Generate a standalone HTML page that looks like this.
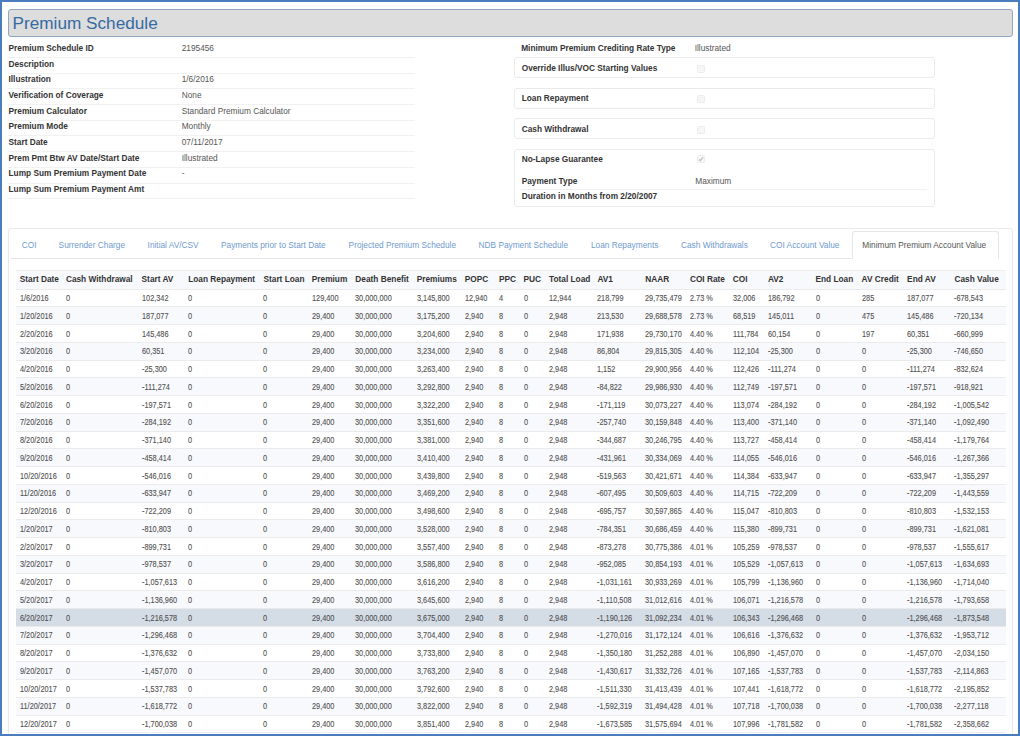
<!DOCTYPE html>
<html><head><meta charset="utf-8"><style>
*{box-sizing:border-box;margin:0;padding:0}
html,body{width:1020px;height:736px;overflow:hidden;background:#fff}
body{position:relative;font-family:"Liberation Sans",sans-serif;color:#333}
.a{position:absolute;white-space:nowrap;line-height:1}
.frame{position:absolute;left:0;top:0;width:1020px;height:736px;border:2px solid #4a7dbd;z-index:10;pointer-events:none}
.title{position:absolute;left:8px;top:9px;width:1004.5px;height:28px;background:#dddddd;border:1px solid #90a6c0;border-radius:3px}
.title span{position:absolute;left:3.5px;top:5.2px;font-size:17.2px;color:#356aa3;line-height:1}
.lbl{font-size:8.3px;font-weight:bold;color:#333}
.val{font-size:8.3px;color:#555}
.sep{position:absolute;height:1px;background:#f1f1f1}
.box{position:absolute;left:514px;width:421px;border:1px solid #eaeaea;border-radius:3px}
.cb{position:absolute;left:697px;width:8px;height:8px;border:1px solid #ececec;border-radius:1.5px;background:#f6f6f6}
.panel{position:absolute;left:8px;top:228px;width:1005px;height:600px;border:1px solid #e9e9e9;border-radius:3px}
.tab{font-size:8.3px;color:#6f9ad0}
.atab{position:absolute;left:852px;top:231px;width:147px;height:28px;border:1px solid #e6e6e6;border-bottom:none;border-radius:3px 3px 0 0;background:#fff}
table{position:absolute;left:16.0px;top:270.0px;width:989.5px;border-collapse:collapse;table-layout:fixed}
td,th{padding:0 0 0 3.8px;text-align:left;white-space:nowrap;overflow:hidden}
th{font-size:8.3px;font-weight:bold;color:#333;height:18.6px;border-top:1px solid #eeeeee;border-bottom:1px solid #ebebeb;background:#f8f9fd;vertical-align:top;padding-top:3.9px;line-height:1}
td{font-size:8.3px;color:#505050;height:17.75px;border-bottom:1px solid #ebebeb;vertical-align:top;padding-top:4.6px;line-height:1}
tr.s td{background:#f8f9fd}
td i{font-style:normal;display:inline-block;-webkit-text-stroke:0.1px #505050;transform:scaleX(0.885);transform-origin:0 50%}
tr.h td{background:#d4dce6}
</style></head><body>
<div class="frame"></div>
<div class="title"><span>Premium Schedule</span></div>

<div class="a lbl" style="left:8.5px;top:43.87px">Premium Schedule ID</div>
<div class="a val" style="left:181.7px;top:43.87px">2195456</div>
<div class="sep" style="left:8px;width:407px;top:56.90px"></div>
<div class="a lbl" style="left:8.5px;top:59.57px">Description</div>
<div class="sep" style="left:8px;width:407px;top:72.60px"></div>
<div class="a lbl" style="left:8.5px;top:75.27px">Illustration</div>
<div class="a val" style="left:181.7px;top:75.27px">1/6/2016</div>
<div class="sep" style="left:8px;width:407px;top:88.30px"></div>
<div class="a lbl" style="left:8.5px;top:90.97px">Verification of Coverage</div>
<div class="a val" style="left:181.7px;top:90.97px">None</div>
<div class="sep" style="left:8px;width:407px;top:104.00px"></div>
<div class="a lbl" style="left:8.5px;top:106.67px">Premium Calculator</div>
<div class="a val" style="left:181.7px;top:106.67px">Standard Premium Calculator</div>
<div class="sep" style="left:8px;width:407px;top:119.70px"></div>
<div class="a lbl" style="left:8.5px;top:122.37px">Premium Mode</div>
<div class="a val" style="left:181.7px;top:122.37px">Monthly</div>
<div class="sep" style="left:8px;width:407px;top:135.40px"></div>
<div class="a lbl" style="left:8.5px;top:138.07px">Start Date</div>
<div class="a val" style="left:181.7px;top:138.07px">07/11/2017</div>
<div class="sep" style="left:8px;width:407px;top:151.10px"></div>
<div class="a lbl" style="left:8.5px;top:153.77px">Prem Pmt Btw AV Date/Start Date</div>
<div class="a val" style="left:181.7px;top:153.77px">Illustrated</div>
<div class="sep" style="left:8px;width:407px;top:166.80px"></div>
<div class="a lbl" style="left:8.5px;top:169.47px">Lump Sum Premium Payment Date</div>
<div class="a val" style="left:181.7px;top:169.47px">-</div>
<div class="sep" style="left:8px;width:407px;top:182.50px"></div>
<div class="a lbl" style="left:8.5px;top:185.17px">Lump Sum Premium Payment Amt</div>
<div class="sep" style="left:8px;width:407px;top:198.20px"></div>
<div class="a lbl" style="left:521.2px;top:43.87px">Minimum Premium Crediting Rate Type</div>
<div class="a val" style="left:694.7px;top:43.87px">Illustrated</div>
<div class="box" style="top:57px;height:21px"></div>
<div class="a lbl" style="left:521.7px;top:63.97px">Override Illus/VOC Starting Values</div>
<div class="cb" style="top:65px"></div>
<div class="box" style="top:88px;height:21px"></div>
<div class="a lbl" style="left:521.7px;top:94.17px">Loan Repayment</div>
<div class="cb" style="top:95.3px"></div>
<div class="box" style="top:118px;height:21px"></div>
<div class="a lbl" style="left:521.7px;top:124.67px">Cash Withdrawal</div>
<div class="cb" style="top:125.6px"></div>
<div class="box" style="top:149px;height:58px"></div>
<div class="a lbl" style="left:521.7px;top:154.87px">No-Lapse Guarantee</div>
<div class="cb" style="top:155px"></div><svg width="8" height="8" viewBox="0 0 8 8" style="position:absolute;left:697px;top:155px"><path d="M2.1 4.4 L3.4 5.6 L6 2.3" fill="none" stroke="#c2c2c2" stroke-width="1.3"/></svg>
<div class="a lbl" style="left:521.7px;top:176.97px">Payment Type</div>
<div class="a val" style="left:695.3px;top:176.97px">Maximum</div>
<div class="sep" style="left:521px;width:405.6px;top:189.3px"></div>
<div class="a lbl" style="left:521.7px;top:192.27px">Duration in Months from 2/20/2007</div>
<div class="panel"></div>
<div class="sep" style="left:11.4px;width:840.7px;top:258px;background:#e6e6e6"></div>
<div class="atab"></div>
<div class="a tab" style="left:21.7px;top:240.97px">COI</div>
<div class="a tab" style="left:58.6px;top:240.97px">Surrender Charge</div>
<div class="a tab" style="left:147.6px;top:240.97px">Initial AV/CSV</div>
<div class="a tab" style="left:221.0px;top:240.97px">Payments prior to Start Date</div>
<div class="a tab" style="left:348.6px;top:240.97px">Projected Premium Schedule</div>
<div class="a tab" style="left:478.6px;top:240.97px">NDB Payment Schedule</div>
<div class="a tab" style="left:591.0px;top:240.97px">Loan Repayments</div>
<div class="a tab" style="left:681.0px;top:240.97px">Cash Withdrawals</div>
<div class="a tab" style="left:770.0px;top:240.97px">COI Account Value</div>
<div class="a tab" style="left:862.3px;top:240.97px;color:#555">Minimum Premium Account Value</div>
<table><colgroup><col style="width:46.10px"><col style="width:75.70px"><col style="width:46.60px"><col style="width:75.30px"><col style="width:48.30px"><col style="width:43.60px"><col style="width:61.30px"><col style="width:48.10px"><col style="width:34.30px"><col style="width:24.50px"><col style="width:25.50px"><col style="width:48.40px"><col style="width:47.80px"><col style="width:44.70px"><col style="width:42.80px"><col style="width:35.20px"><col style="width:47.60px"><col style="width:46.10px"><col style="width:45.50px"><col style="width:47.40px"><col style="width:54.70px"></colgroup>
<tr><th>Start Date</th><th>Cash Withdrawal</th><th>Start AV</th><th>Loan Repayment</th><th>Start Loan</th><th>Premium</th><th>Death Benefit</th><th>Premiums</th><th>POPC</th><th>PPC</th><th>PUC</th><th>Total Load</th><th>AV1</th><th>NAAR</th><th>COI Rate</th><th>COI</th><th>AV2</th><th>End Loan</th><th>AV Credit</th><th>End AV</th><th>Cash Value</th></tr>
<tr><td><i>1/6/2016</i></td><td><i>0</i></td><td><i>102,342</i></td><td><i>0</i></td><td><i>0</i></td><td><i>129,400</i></td><td><i>30,000,000</i></td><td><i>3,145,800</i></td><td><i>12,940</i></td><td><i>4</i></td><td><i>0</i></td><td><i>12,944</i></td><td><i>218,799</i></td><td><i>29,735,479</i></td><td><i>2.73 %</i></td><td><i>32,006</i></td><td><i>186,792</i></td><td><i>0</i></td><td><i>285</i></td><td><i>187,077</i></td><td><i>-678,543</i></td></tr>
<tr class="s"><td><i>1/20/2016</i></td><td><i>0</i></td><td><i>187,077</i></td><td><i>0</i></td><td><i>0</i></td><td><i>29,400</i></td><td><i>30,000,000</i></td><td><i>3,175,200</i></td><td><i>2,940</i></td><td><i>8</i></td><td><i>0</i></td><td><i>2,948</i></td><td><i>213,530</i></td><td><i>29,688,578</i></td><td><i>2.73 %</i></td><td><i>68,519</i></td><td><i>145,011</i></td><td><i>0</i></td><td><i>475</i></td><td><i>145,486</i></td><td><i>-720,134</i></td></tr>
<tr><td><i>2/20/2016</i></td><td><i>0</i></td><td><i>145,486</i></td><td><i>0</i></td><td><i>0</i></td><td><i>29,400</i></td><td><i>30,000,000</i></td><td><i>3,204,600</i></td><td><i>2,940</i></td><td><i>8</i></td><td><i>0</i></td><td><i>2,948</i></td><td><i>171,938</i></td><td><i>29,730,170</i></td><td><i>4.40 %</i></td><td><i>111,784</i></td><td><i>60,154</i></td><td><i>0</i></td><td><i>197</i></td><td><i>60,351</i></td><td><i>-660,999</i></td></tr>
<tr class="s"><td><i>3/20/2016</i></td><td><i>0</i></td><td><i>60,351</i></td><td><i>0</i></td><td><i>0</i></td><td><i>29,400</i></td><td><i>30,000,000</i></td><td><i>3,234,000</i></td><td><i>2,940</i></td><td><i>8</i></td><td><i>0</i></td><td><i>2,948</i></td><td><i>86,804</i></td><td><i>29,815,305</i></td><td><i>4.40 %</i></td><td><i>112,104</i></td><td><i>-25,300</i></td><td><i>0</i></td><td><i>0</i></td><td><i>-25,300</i></td><td><i>-746,650</i></td></tr>
<tr><td><i>4/20/2016</i></td><td><i>0</i></td><td><i>-25,300</i></td><td><i>0</i></td><td><i>0</i></td><td><i>29,400</i></td><td><i>30,000,000</i></td><td><i>3,263,400</i></td><td><i>2,940</i></td><td><i>8</i></td><td><i>0</i></td><td><i>2,948</i></td><td><i>1,152</i></td><td><i>29,900,956</i></td><td><i>4.40 %</i></td><td><i>112,426</i></td><td><i>-111,274</i></td><td><i>0</i></td><td><i>0</i></td><td><i>-111,274</i></td><td><i>-832,624</i></td></tr>
<tr class="s"><td><i>5/20/2016</i></td><td><i>0</i></td><td><i>-111,274</i></td><td><i>0</i></td><td><i>0</i></td><td><i>29,400</i></td><td><i>30,000,000</i></td><td><i>3,292,800</i></td><td><i>2,940</i></td><td><i>8</i></td><td><i>0</i></td><td><i>2,948</i></td><td><i>-84,822</i></td><td><i>29,986,930</i></td><td><i>4.40 %</i></td><td><i>112,749</i></td><td><i>-197,571</i></td><td><i>0</i></td><td><i>0</i></td><td><i>-197,571</i></td><td><i>-918,921</i></td></tr>
<tr><td><i>6/20/2016</i></td><td><i>0</i></td><td><i>-197,571</i></td><td><i>0</i></td><td><i>0</i></td><td><i>29,400</i></td><td><i>30,000,000</i></td><td><i>3,322,200</i></td><td><i>2,940</i></td><td><i>8</i></td><td><i>0</i></td><td><i>2,948</i></td><td><i>-171,119</i></td><td><i>30,073,227</i></td><td><i>4.40 %</i></td><td><i>113,074</i></td><td><i>-284,192</i></td><td><i>0</i></td><td><i>0</i></td><td><i>-284,192</i></td><td><i>-1,005,542</i></td></tr>
<tr class="s"><td><i>7/20/2016</i></td><td><i>0</i></td><td><i>-284,192</i></td><td><i>0</i></td><td><i>0</i></td><td><i>29,400</i></td><td><i>30,000,000</i></td><td><i>3,351,600</i></td><td><i>2,940</i></td><td><i>8</i></td><td><i>0</i></td><td><i>2,948</i></td><td><i>-257,740</i></td><td><i>30,159,848</i></td><td><i>4.40 %</i></td><td><i>113,400</i></td><td><i>-371,140</i></td><td><i>0</i></td><td><i>0</i></td><td><i>-371,140</i></td><td><i>-1,092,490</i></td></tr>
<tr><td><i>8/20/2016</i></td><td><i>0</i></td><td><i>-371,140</i></td><td><i>0</i></td><td><i>0</i></td><td><i>29,400</i></td><td><i>30,000,000</i></td><td><i>3,381,000</i></td><td><i>2,940</i></td><td><i>8</i></td><td><i>0</i></td><td><i>2,948</i></td><td><i>-344,687</i></td><td><i>30,246,795</i></td><td><i>4.40 %</i></td><td><i>113,727</i></td><td><i>-458,414</i></td><td><i>0</i></td><td><i>0</i></td><td><i>-458,414</i></td><td><i>-1,179,764</i></td></tr>
<tr class="s"><td><i>9/20/2016</i></td><td><i>0</i></td><td><i>-458,414</i></td><td><i>0</i></td><td><i>0</i></td><td><i>29,400</i></td><td><i>30,000,000</i></td><td><i>3,410,400</i></td><td><i>2,940</i></td><td><i>8</i></td><td><i>0</i></td><td><i>2,948</i></td><td><i>-431,961</i></td><td><i>30,334,069</i></td><td><i>4.40 %</i></td><td><i>114,055</i></td><td><i>-546,016</i></td><td><i>0</i></td><td><i>0</i></td><td><i>-546,016</i></td><td><i>-1,267,366</i></td></tr>
<tr><td><i>10/20/2016</i></td><td><i>0</i></td><td><i>-546,016</i></td><td><i>0</i></td><td><i>0</i></td><td><i>29,400</i></td><td><i>30,000,000</i></td><td><i>3,439,800</i></td><td><i>2,940</i></td><td><i>8</i></td><td><i>0</i></td><td><i>2,948</i></td><td><i>-519,563</i></td><td><i>30,421,671</i></td><td><i>4.40 %</i></td><td><i>114,384</i></td><td><i>-633,947</i></td><td><i>0</i></td><td><i>0</i></td><td><i>-633,947</i></td><td><i>-1,355,297</i></td></tr>
<tr class="s"><td><i>11/20/2016</i></td><td><i>0</i></td><td><i>-633,947</i></td><td><i>0</i></td><td><i>0</i></td><td><i>29,400</i></td><td><i>30,000,000</i></td><td><i>3,469,200</i></td><td><i>2,940</i></td><td><i>8</i></td><td><i>0</i></td><td><i>2,948</i></td><td><i>-607,495</i></td><td><i>30,509,603</i></td><td><i>4.40 %</i></td><td><i>114,715</i></td><td><i>-722,209</i></td><td><i>0</i></td><td><i>0</i></td><td><i>-722,209</i></td><td><i>-1,443,559</i></td></tr>
<tr><td><i>12/20/2016</i></td><td><i>0</i></td><td><i>-722,209</i></td><td><i>0</i></td><td><i>0</i></td><td><i>29,400</i></td><td><i>30,000,000</i></td><td><i>3,498,600</i></td><td><i>2,940</i></td><td><i>8</i></td><td><i>0</i></td><td><i>2,948</i></td><td><i>-695,757</i></td><td><i>30,597,865</i></td><td><i>4.40 %</i></td><td><i>115,047</i></td><td><i>-810,803</i></td><td><i>0</i></td><td><i>0</i></td><td><i>-810,803</i></td><td><i>-1,532,153</i></td></tr>
<tr class="s"><td><i>1/20/2017</i></td><td><i>0</i></td><td><i>-810,803</i></td><td><i>0</i></td><td><i>0</i></td><td><i>29,400</i></td><td><i>30,000,000</i></td><td><i>3,528,000</i></td><td><i>2,940</i></td><td><i>8</i></td><td><i>0</i></td><td><i>2,948</i></td><td><i>-784,351</i></td><td><i>30,686,459</i></td><td><i>4.40 %</i></td><td><i>115,380</i></td><td><i>-899,731</i></td><td><i>0</i></td><td><i>0</i></td><td><i>-899,731</i></td><td><i>-1,621,081</i></td></tr>
<tr><td><i>2/20/2017</i></td><td><i>0</i></td><td><i>-899,731</i></td><td><i>0</i></td><td><i>0</i></td><td><i>29,400</i></td><td><i>30,000,000</i></td><td><i>3,557,400</i></td><td><i>2,940</i></td><td><i>8</i></td><td><i>0</i></td><td><i>2,948</i></td><td><i>-873,278</i></td><td><i>30,775,386</i></td><td><i>4.01 %</i></td><td><i>105,259</i></td><td><i>-978,537</i></td><td><i>0</i></td><td><i>0</i></td><td><i>-978,537</i></td><td><i>-1,555,617</i></td></tr>
<tr class="s"><td><i>3/20/2017</i></td><td><i>0</i></td><td><i>-978,537</i></td><td><i>0</i></td><td><i>0</i></td><td><i>29,400</i></td><td><i>30,000,000</i></td><td><i>3,586,800</i></td><td><i>2,940</i></td><td><i>8</i></td><td><i>0</i></td><td><i>2,948</i></td><td><i>-952,085</i></td><td><i>30,854,193</i></td><td><i>4.01 %</i></td><td><i>105,529</i></td><td><i>-1,057,613</i></td><td><i>0</i></td><td><i>0</i></td><td><i>-1,057,613</i></td><td><i>-1,634,693</i></td></tr>
<tr><td><i>4/20/2017</i></td><td><i>0</i></td><td><i>-1,057,613</i></td><td><i>0</i></td><td><i>0</i></td><td><i>29,400</i></td><td><i>30,000,000</i></td><td><i>3,616,200</i></td><td><i>2,940</i></td><td><i>8</i></td><td><i>0</i></td><td><i>2,948</i></td><td><i>-1,031,161</i></td><td><i>30,933,269</i></td><td><i>4.01 %</i></td><td><i>105,799</i></td><td><i>-1,136,960</i></td><td><i>0</i></td><td><i>0</i></td><td><i>-1,136,960</i></td><td><i>-1,714,040</i></td></tr>
<tr class="s"><td><i>5/20/2017</i></td><td><i>0</i></td><td><i>-1,136,960</i></td><td><i>0</i></td><td><i>0</i></td><td><i>29,400</i></td><td><i>30,000,000</i></td><td><i>3,645,600</i></td><td><i>2,940</i></td><td><i>8</i></td><td><i>0</i></td><td><i>2,948</i></td><td><i>-1,110,508</i></td><td><i>31,012,616</i></td><td><i>4.01 %</i></td><td><i>106,071</i></td><td><i>-1,216,578</i></td><td><i>0</i></td><td><i>0</i></td><td><i>-1,216,578</i></td><td><i>-1,793,658</i></td></tr>
<tr class="h"><td><i>6/20/2017</i></td><td><i>0</i></td><td><i>-1,216,578</i></td><td><i>0</i></td><td><i>0</i></td><td><i>29,400</i></td><td><i>30,000,000</i></td><td><i>3,675,000</i></td><td><i>2,940</i></td><td><i>8</i></td><td><i>0</i></td><td><i>2,948</i></td><td><i>-1,190,126</i></td><td><i>31,092,234</i></td><td><i>4.01 %</i></td><td><i>106,343</i></td><td><i>-1,296,468</i></td><td><i>0</i></td><td><i>0</i></td><td><i>-1,296,468</i></td><td><i>-1,873,548</i></td></tr>
<tr class="s"><td><i>7/20/2017</i></td><td><i>0</i></td><td><i>-1,296,468</i></td><td><i>0</i></td><td><i>0</i></td><td><i>29,400</i></td><td><i>30,000,000</i></td><td><i>3,704,400</i></td><td><i>2,940</i></td><td><i>8</i></td><td><i>0</i></td><td><i>2,948</i></td><td><i>-1,270,016</i></td><td><i>31,172,124</i></td><td><i>4.01 %</i></td><td><i>106,616</i></td><td><i>-1,376,632</i></td><td><i>0</i></td><td><i>0</i></td><td><i>-1,376,632</i></td><td><i>-1,953,712</i></td></tr>
<tr><td><i>8/20/2017</i></td><td><i>0</i></td><td><i>-1,376,632</i></td><td><i>0</i></td><td><i>0</i></td><td><i>29,400</i></td><td><i>30,000,000</i></td><td><i>3,733,800</i></td><td><i>2,940</i></td><td><i>8</i></td><td><i>0</i></td><td><i>2,948</i></td><td><i>-1,350,180</i></td><td><i>31,252,288</i></td><td><i>4.01 %</i></td><td><i>106,890</i></td><td><i>-1,457,070</i></td><td><i>0</i></td><td><i>0</i></td><td><i>-1,457,070</i></td><td><i>-2,034,150</i></td></tr>
<tr class="s"><td><i>9/20/2017</i></td><td><i>0</i></td><td><i>-1,457,070</i></td><td><i>0</i></td><td><i>0</i></td><td><i>29,400</i></td><td><i>30,000,000</i></td><td><i>3,763,200</i></td><td><i>2,940</i></td><td><i>8</i></td><td><i>0</i></td><td><i>2,948</i></td><td><i>-1,430,617</i></td><td><i>31,332,726</i></td><td><i>4.01 %</i></td><td><i>107,165</i></td><td><i>-1,537,783</i></td><td><i>0</i></td><td><i>0</i></td><td><i>-1,537,783</i></td><td><i>-2,114,863</i></td></tr>
<tr><td><i>10/20/2017</i></td><td><i>0</i></td><td><i>-1,537,783</i></td><td><i>0</i></td><td><i>0</i></td><td><i>29,400</i></td><td><i>30,000,000</i></td><td><i>3,792,600</i></td><td><i>2,940</i></td><td><i>8</i></td><td><i>0</i></td><td><i>2,948</i></td><td><i>-1,511,330</i></td><td><i>31,413,439</i></td><td><i>4.01 %</i></td><td><i>107,441</i></td><td><i>-1,618,772</i></td><td><i>0</i></td><td><i>0</i></td><td><i>-1,618,772</i></td><td><i>-2,195,852</i></td></tr>
<tr class="s"><td><i>11/20/2017</i></td><td><i>0</i></td><td><i>-1,618,772</i></td><td><i>0</i></td><td><i>0</i></td><td><i>29,400</i></td><td><i>30,000,000</i></td><td><i>3,822,000</i></td><td><i>2,940</i></td><td><i>8</i></td><td><i>0</i></td><td><i>2,948</i></td><td><i>-1,592,319</i></td><td><i>31,494,428</i></td><td><i>4.01 %</i></td><td><i>107,718</i></td><td><i>-1,700,038</i></td><td><i>0</i></td><td><i>0</i></td><td><i>-1,700,038</i></td><td><i>-2,277,118</i></td></tr>
<tr><td><i>12/20/2017</i></td><td><i>0</i></td><td><i>-1,700,038</i></td><td><i>0</i></td><td><i>0</i></td><td><i>29,400</i></td><td><i>30,000,000</i></td><td><i>3,851,400</i></td><td><i>2,940</i></td><td><i>8</i></td><td><i>0</i></td><td><i>2,948</i></td><td><i>-1,673,585</i></td><td><i>31,575,694</i></td><td><i>4.01 %</i></td><td><i>107,996</i></td><td><i>-1,781,582</i></td><td><i>0</i></td><td><i>0</i></td><td><i>-1,781,582</i></td><td><i>-2,358,662</i></td></tr>
</table>
</body></html>
